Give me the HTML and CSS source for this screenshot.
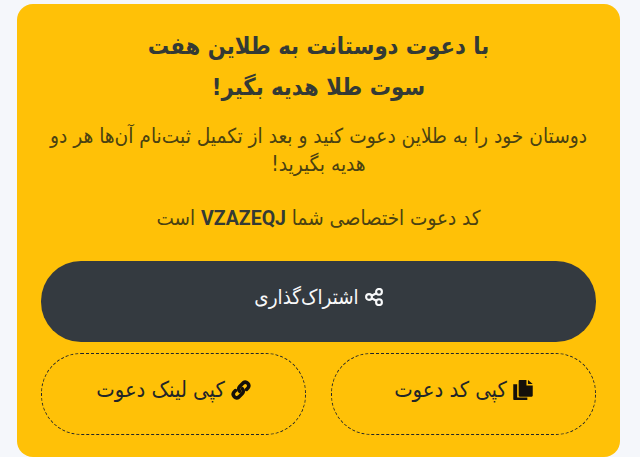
FILE: index.html
```html
<!DOCTYPE html>
<html lang="fa" dir="rtl">
<head>
<meta charset="utf-8">
<title>دعوت دوستان</title>
<link rel="stylesheet" href="styles.css">
</head>
<body>
<main class="card">
  <h1 class="title">با دعوت دوستانت به طلاین هفت<br>سوت طلا هدیه بگیر!</h1>
  <p class="desc">دوستان خود را به طلاین دعوت کنید و بعد از تکمیل ثبت‌نام آن‌ها هر دو هدیه بگیرید!</p>
  <p class="code">کد دعوت اختصاصی شما <strong>VZAZEQJ</strong> است</p>
  <button class="btn btn-dark" type="button">
    <svg class="icon" viewBox="0 0 18 18" aria-hidden="true"><g fill="none" stroke="currentColor" stroke-width="2.100"><circle cx="14" cy="3.800" r="2.900"/><circle cx="4" cy="9" r="2.900"/><circle cx="14" cy="14.200" r="2.900"/><path d="M6.600 7.700l4.800-2.500M6.600 10.300l4.800 2.500"/></g></svg>
    <span>اشتراک‌گذاری</span>
  </button>
  <div class="row">
    <button class="btn btn-outline" type="button">
      <svg class="icon icon-lg" viewBox="1 1 18 18.500" aria-hidden="true"><path fill="currentColor" d="M7 1h6.200v5h5.800v9.400c0 .6-.4 1-1 1H7c-.6 0-1-.4-1-1V2c0-.6.4-1 1-1zM14.600 1l4.400 3.700h-4.400zM1 5h3.600v12.200H14v2.300H2c-.6 0-1-.4-1-1z"/></svg>
      <span>کپی کد دعوت</span>
    </button>
    <button class="btn btn-outline" type="button">
      <svg class="icon icon-lg" viewBox="0 0 20 20" aria-hidden="true"><g fill="none" stroke="currentColor" stroke-width="3.600" stroke-linecap="round"><path d="M8.700 11.300a3.500 3.500 0 0 1 0-4.900l3.400-3.400a3.500 3.500 0 0 1 4.900 4.900l-1.500 1.500"/><path d="M11.300 8.700a3.500 3.500 0 0 1 0 4.900l-3.400 3.400a3.500 3.500 0 0 1-4.900-4.900l1.500-1.500"/></g></svg>
      <span>کپی لینک دعوت</span>
    </button>
  </div>
</main>
</body>
</html>
```

FILE: styles.css
```css
* { box-sizing: border-box; }
html, body { height: 100%; }
body {
  margin: 0;
  padding: 4px 20px 0 17px;
  background: #f5f7fb;
  font-family: "DejaVu Sans Condensed", "DejaVu Sans", Roboto, sans-serif;
  color: #212529;
  overflow: hidden;
}
.card {
  height: 453px;
  padding: 22px 24px 22px;
  background: #ffc107;
  border-radius: 16px;
  display: flex;
  flex-direction: column;
  text-align: center;
}
.title {
  margin: 0;
  font-size: 23.600px;
  line-height: 41px;
  font-weight: 700;
  color: #343a35;
}
.desc {
  margin: 14px 0 0;
  font-size: 20.700px;
  line-height: 28px;
  color: #4a4212;
}
.code {
  margin: 26px 0 0;
  font-size: 20.500px;
  line-height: 28px;
  color: #4a4212;
}
.code strong { font-family: Roboto, sans-serif; font-size: 19.500px; font-weight: 700; color: #343a35; }
.btn {
  display: flex;
  align-items: center;
  justify-content: center;
  gap: 6px;
  border-radius: 40px;
  font-family: inherit;
  cursor: pointer;
}
.btn-dark {
  height: 81px;
  margin-top: 28px;
  padding: 0 0 9px;
  border: 0;
  background: #343a40;
  color: #f8f9fa;
  font-size: 20.400px;
}
.row {
  display: grid;
  grid-template-columns: 265px 265px;
  justify-content: space-between;
  margin-top: 11px;
}
.btn-outline {
  height: 82px;
  padding: 0 0 9px;
  border: 1px dashed #212529;
  background: transparent;
  color: #212529;
  font-size: 21.800px;
}
.icon { width: 18px; height: 18px; flex: none; }
.icon-lg { width: 20px; height: 20px; color: #14100a; }
```
